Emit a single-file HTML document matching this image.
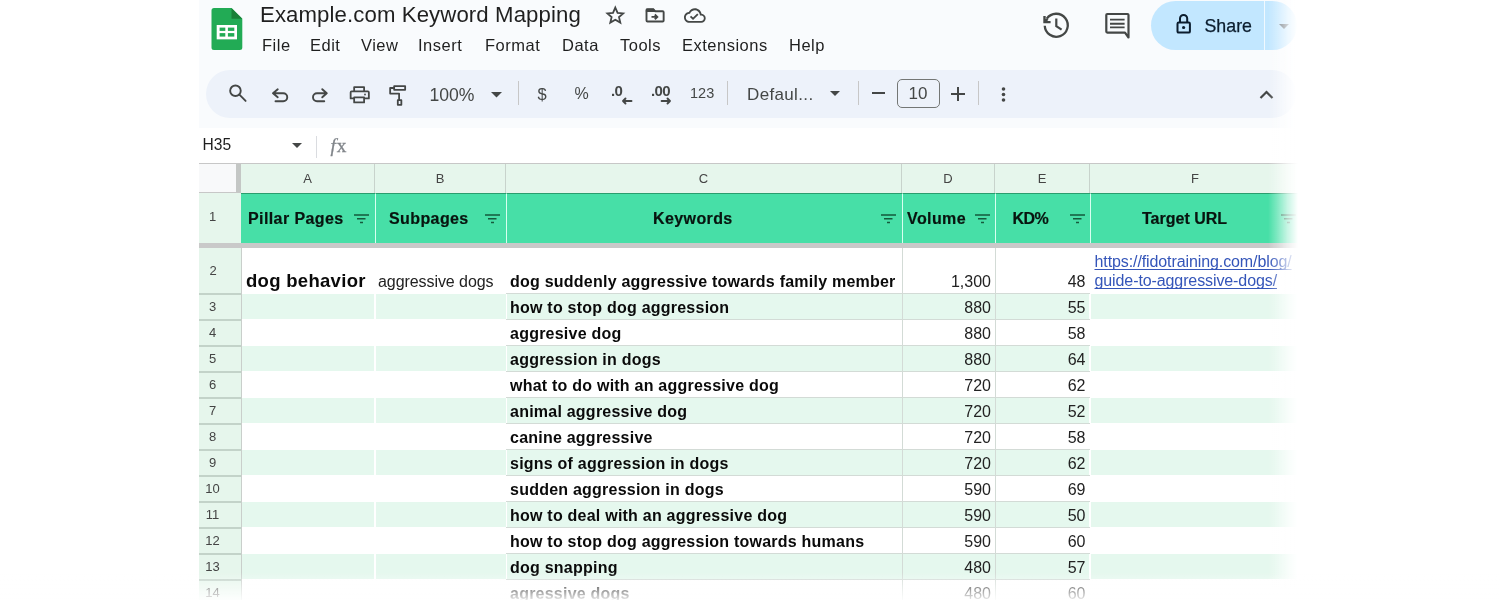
<!DOCTYPE html>
<html><head><meta charset="utf-8">
<style>
*{margin:0;padding:0;box-sizing:border-box}
html,body{width:1500px;height:600px;overflow:hidden;background:#fff;font-family:"Liberation Sans",sans-serif}
.a{position:absolute;white-space:nowrap}
#top{position:absolute;left:199px;top:0;width:1101px;height:128px;background:#f9fbfd}
#tb{position:absolute;left:205.5px;top:69.5px;width:1090.5px;height:48.8px;background:#edf2fa;border-radius:25px}
.menu{font-size:16.5px;color:#1f1f1f;top:35.5px;letter-spacing:0.5px}
.ico{position:absolute}
.tbt{color:#444746}
.sep{position:absolute;width:1px;background:#c7c7c7}
.colh{position:absolute;top:164px;height:29px;background:#e6f6ec;font-size:13px;color:#444;text-align:center;line-height:29px;border-right:1px solid #c8d3cc}
.hdr{position:absolute;top:193px;height:50px;background:#47dfa7;border-top:1px solid #2a9e6e}
.hdr span{position:absolute;top:16px;font-size:16px;font-weight:bold;color:#08140f;letter-spacing:0.4px;-webkit-text-stroke:0.2px #08140f}
.flt{position:absolute;top:20px;width:15px;height:10px}
.rowh{position:absolute;left:199px;width:42px;background:#e6f6ec;font-size:13px;color:#444;}
.rowh span{position:absolute;left:0;width:27px;text-align:center}
.band{position:absolute;background:#e5f8ee}
.vl{position:absolute;width:1px;background:#d3dbd6}
.hl{position:absolute;height:1px;background:#d3dbd6}
.kw{font-size:16px;font-weight:bold;color:#0a0a0a;letter-spacing:0.23px}
.num{font-size:16px;color:#222;text-align:right}
</style></head><body><div id="wrap" style="position:absolute;left:0;top:0;width:1500px;height:600px;overflow:hidden;will-change:transform">
<div id="top"></div>
<!-- logo -->
<svg class="ico" style="left:211px;top:8px" width="32" height="42" viewBox="0 0 32 42">
 <path d="M3 0H20.5L31.3 10.8V39.5a2.5 2.5 0 0 1-2.5 2.5H3a2.5 2.5 0 0 1-2.5-2.5V2.5A2.5 2.5 0 0 1 3 0z" fill="#22ab55"/>
 <path d="M20.5 0L31.3 10.8H20.5z" fill="#188038"/>
 <rect x="5.7" y="17" width="20.3" height="14.35" fill="#fff"/>
 <rect x="8.6" y="19.6" width="5.7" height="3.3" fill="#22ab55"/>
 <rect x="16.9" y="19.6" width="6.4" height="3.3" fill="#22ab55"/>
 <rect x="8.6" y="25.1" width="5.7" height="3.5" fill="#22ab55"/>
 <rect x="16.9" y="25.1" width="6.4" height="3.5" fill="#22ab55"/>
</svg>
<div class="a" style="left:260px;top:2px;font-size:22.2px;color:#1f1f1f;letter-spacing:0.1px">Example.com Keyword Mapping</div>
<!-- star -->
<svg class="ico" style="left:600px;top:2px" width="112" height="28" viewBox="0 0 112 28">
<path d="M15.3 5.6L17.6 10.9L23.2 11.4L19 15.1L20.3 20.6L15.3 17.7L10.3 20.6L11.6 15.1L7.4 11.4L13 10.9Z" fill="none" stroke="#444746" stroke-width="1.8" stroke-linejoin="miter"/>
<path d="M46.5 8.3a1 1 0 0 1 1-1H53.3L55.3 9.3H62.65a1 1 0 0 1 1 1V18.55a1 1 0 0 1-1 1H47.5a1 1 0 0 1-1-1Z" fill="none" stroke="#444746" stroke-width="1.9"/>
<path d="M46.5 7.3H53.3L55.3 9.3H46.5Z" fill="#444746" stroke="#444746" stroke-width="1.2"/>
<path d="M51.5 14.9H57.2M54.8 12.5L57.3 14.9L54.8 17.3" fill="none" stroke="#444746" stroke-width="1.9"/>
<g transform="translate(84 2.73) scale(0.904)"><path d="M19.35 10.04C18.67 6.59 15.64 4 12 4 9.11 4 6.6 5.64 5.35 8.04 2.34 8.36 0 10.91 0 14c0 3.31 2.69 6 6 6h13c2.76 0 5-2.24 5-5 0-2.64-2.05-4.78-4.65-4.96zM19 18H6c-2.21 0-4-1.79-4-4 0-2.05 1.53-3.76 3.56-3.97l1.07-.11.5-.95C8.08 7.14 9.94 6 12 6c2.62 0 4.88 1.86 5.39 4.43l.3 1.5 1.53.11c1.56.1 2.78 1.41 2.78 2.96 0 1.65-1.35 3-3 3zm-9-3.82l-2.09-2.09L6.5 13.5 10 17l6.01-6.01-1.41-1.41z" fill="#444746"/></g>
</svg>
<!-- menu -->
<div class="a menu" style="left:262px">File</div>
<div class="a menu" style="left:310px">Edit</div>
<div class="a menu" style="left:361px">View</div>
<div class="a menu" style="left:418px">Insert</div>
<div class="a menu" style="left:485px">Format</div>
<div class="a menu" style="left:562px">Data</div>
<div class="a menu" style="left:620px">Tools</div>
<div class="a menu" style="left:682px">Extensions</div>
<div class="a menu" style="left:789px">Help</div>
<!-- history -->
<svg class="ico" style="left:1036px;top:6px" width="40" height="38" viewBox="0 0 40 38"><path d="M10.8 12.7A11.5 11.5 0 1 1 8.76 19.7" fill="none" stroke="#444746" stroke-width="2.3"/><path d="M8.5 10V16.1H14.6M8.9 15.7L11.6 13" fill="none" stroke="#444746" stroke-width="2.4"/><path d="M20.3 12.4V20.2L25.6 23.6" fill="none" stroke="#444746" stroke-width="2.2"/></svg>
<!-- comment -->
<svg class="ico" style="left:1098px;top:6px" width="40" height="38" viewBox="0 0 40 38"><path d="M9.3 8H29.5a1 1 0 0 1 1 1V31.5L27 26.6H9.3a1 1 0 0 1-1-1V9a1 1 0 0 1 1-1z" fill="none" stroke="#444746" stroke-width="2.2" stroke-linejoin="round"/><path d="M12 13.6H26.6M12 17.7H26.6M12 21.4H26.6" stroke="#444746" stroke-width="1.9"/></svg>
<!-- share -->
<div style="position:absolute;left:1151px;top:1px;width:146px;height:49px;background:#c2e7ff;border-radius:24.5px"></div>
<div style="position:absolute;left:1263.5px;top:1px;width:1.2px;height:49px;background:rgba(255,255,255,0.75)"></div>
<svg class="ico" style="left:1168px;top:8px" width="32" height="32" viewBox="0 0 32 32"><rect x="9.5" y="14.6" width="12.4" height="10" rx="1.2" fill="none" stroke="#0b1d2e" stroke-width="2"/><path d="M12 14.6V10.6a3.6 3.6 0 0 1 7.2 0V14.6" fill="none" stroke="#0b1d2e" stroke-width="2"/><circle cx="15.6" cy="19.5" r="1.6" fill="#0b1d2e"/></svg>
<div class="a" style="left:1204.5px;top:15.5px;font-size:17.8px;color:#0b1d2e;-webkit-text-stroke:0.25px #0b1d2e">Share</div>
<svg class="ico" style="left:1279px;top:24px" width="10" height="5" viewBox="0 0 10 5"><path d="M0 0h10L5 5z" fill="#5b6770"/></svg>

<!-- toolbar -->
<div id="tb"></div>
<svg class="ico" style="left:224px;top:80px" width="30" height="28" viewBox="0 0 30 28"><circle cx="11.45" cy="10.75" r="5.3" fill="none" stroke="#444746" stroke-width="1.9"/><path d="M15.4 14.7L21.6 20.9" stroke="#444746" stroke-width="1.9" stroke-linecap="round"/></svg>
<svg class="ico" style="left:266px;top:80px" width="70" height="30" viewBox="0 0 70 30"><g fill="none" stroke="#444746" stroke-width="1.9" stroke-linecap="round" stroke-linejoin="round"><path d="M11.75 9.25L7 13.25L11.75 17.25M7 13.25H17.25A4 4 0 0 1 17.25 21.25H9.5"/><path d="M56.25 9.25L60.75 13.25L56.25 17.25M60.75 13.25H51A4 4 0 0 0 51 21.25H58.25"/></g></svg>
<svg class="ico" style="left:344px;top:80px" width="70" height="30" viewBox="0 0 70 30"><g fill="none" stroke="#444746" stroke-width="1.8" stroke-linejoin="round"><path d="M10.15 11.4V7.15H20.1V11.4"/><path d="M10.15 18.4H6.65V12.4a1 1 0 0 1 1-1H23.85a1 1 0 0 1 1 1V18.4H20.1"/><rect x="10.15" y="17.4" width="9.95" height="5"/><rect x="50.15" y="6.15" width="11" height="3.7"/><path d="M50.15 8H46.15V13.6H55.1V20.15"/><rect x="53.8" y="20.15" width="3.55" height="4.7"/></g><circle cx="21" cy="14.5" r="0.9" fill="#444746"/></svg>
<div class="a tbt" style="left:429.5px;top:84.5px;font-size:17.6px">100%</div>
<svg class="ico" style="left:491px;top:92px" width="11" height="6" viewBox="0 0 11 6"><path d="M0 0h11L5.5 5.5z" fill="#444746"/></svg>
<div class="sep" style="left:518px;top:81px;height:24px"></div>
<div class="a tbt" style="left:537.5px;top:84.5px;font-size:16.5px">$</div>
<div class="a tbt" style="left:574.5px;top:85px;font-size:16px">%</div>
<div class="a tbt" style="left:611px;top:82px;font-size:15px;font-weight:bold;letter-spacing:-0.6px">.0</div>
<div class="a tbt" style="left:651px;top:82px;font-size:15px;font-weight:bold;letter-spacing:-0.6px">.00</div>
<svg class="ico" style="left:604px;top:78px" width="76" height="32" viewBox="0 0 76 32"><g fill="none" stroke="#444746" stroke-width="1.9" stroke-linecap="round" stroke-linejoin="round"><path d="M27.5 23H19M21.5 20.5L19 23L21.5 25.5"/><path d="M57.6 23H66M63.5 20.5L66 23L63.5 25.5"/></g></svg>
<div class="a tbt" style="left:690px;top:85px;font-size:14.5px">123</div>
<div class="sep" style="left:727px;top:81px;height:24px"></div>
<div class="a tbt" style="left:747px;top:84.5px;font-size:17px;letter-spacing:0.35px">Defaul...</div>
<svg class="ico" style="left:830px;top:91px" width="10" height="5" viewBox="0 0 10 5"><path d="M0 0h10L5 5z" fill="#444746"/></svg>
<div class="sep" style="left:858px;top:81px;height:24px"></div>
<div style="position:absolute;left:872px;top:92px;width:13px;height:2px;background:#444746"></div>
<div style="position:absolute;left:897px;top:79px;width:43px;height:29px;border:1.2px solid #747775;border-radius:5px"></div>
<div class="a tbt" style="left:908.5px;top:84px;font-size:17px">10</div>
<svg class="ico" style="left:951px;top:87px" width="14" height="14" viewBox="0 0 14 14"><path d="M0 7h14M7 0v14" stroke="#444746" stroke-width="2"/></svg>
<div class="sep" style="left:978px;top:81px;height:24px"></div>
<svg class="ico" style="left:1001px;top:87px" width="5" height="15" viewBox="0 0 5 15"><circle cx="2.5" cy="2" r="1.8" fill="#444746"/><circle cx="2.5" cy="7.5" r="1.8" fill="#444746"/><circle cx="2.5" cy="13" r="1.8" fill="#444746"/></svg>
<svg class="ico" style="left:1259px;top:90px" width="15" height="9" viewBox="0 0 15 9"><path d="M1.5 8l6-6 6 6" fill="none" stroke="#444746" stroke-width="2.2"/></svg>

<!-- formula bar -->
<div class="a" style="left:202.5px;top:136px;font-size:15.6px;color:#1f1f1f">H35</div>
<svg class="ico" style="left:292px;top:143px" width="10" height="5" viewBox="0 0 10 5"><path d="M0 0h10L5 5z" fill="#444746"/></svg>
<div class="sep" style="left:316px;top:136px;height:22px;background:#dadce0"></div>
<div class="a" style="left:330.5px;top:135px;font-size:19.3px;font-family:'Liberation Serif',serif;color:#80858a;-webkit-text-stroke:0.3px #80858a"><i>f</i><span style="margin-left:1px">x</span></div>

<!-- grid -->
<div style="position:absolute;left:199px;top:163px;width:1101px;height:1px;background:#c7c7c7"></div>
<div style="position:absolute;left:199px;top:164px;width:37px;height:29px;background:#f8f9fa"></div>
<div style="position:absolute;left:236px;top:164px;width:5px;height:29px;background:#c4c7c5"></div>
<div class="colh" style="left:241px;width:134px">A</div>
<div class="colh" style="left:375px;width:131px">B</div>
<div class="colh" style="left:506px;width:396px">C</div>
<div class="colh" style="left:902px;width:93px">D</div>
<div class="colh" style="left:995px;width:95px">E</div>
<div class="colh" style="left:1090px;width:210px;border-right:none">F</div>
<div style="position:absolute;left:199px;top:192px;width:42px;height:1px;background:#c7c7c7"></div>

<!-- header row -->
<div class="rowh" style="top:193px;height:50px;border-bottom:none"><span style="top:16px">1</span></div>

<div class="hdr" style="left:241px;width:134px"><span style="left:7px">Pillar Pages</span><svg class="flt" style="left:113px" viewBox="0 0 15 10"><path d="M0 1h15M3 4.8h8.5M6 8.5h3" stroke="#155a3c" stroke-width="1.5"/></svg></div>
<div class="hdr" style="left:375px;width:131px;border-left:1.5px solid #d8fff0"><span style="left:13px">Subpages</span><svg class="flt" style="left:109px" viewBox="0 0 15 10"><path d="M0 1h15M3 4.8h8.5M6 8.5h3" stroke="#155a3c" stroke-width="1.5"/></svg></div>
<div class="hdr" style="left:506px;width:396px;border-left:1.5px solid #d8fff0"><span style="left:146px">Keywords</span><svg class="flt" style="left:374px" viewBox="0 0 15 10"><path d="M0 1h15M3 4.8h8.5M6 8.5h3" stroke="#155a3c" stroke-width="1.5"/></svg></div>
<div class="hdr" style="left:902px;width:93px;border-left:1.5px solid #d8fff0"><span style="left:4px">Volume</span><svg class="flt" style="left:72px" viewBox="0 0 15 10"><path d="M0 1h15M3 4.8h8.5M6 8.5h3" stroke="#155a3c" stroke-width="1.5"/></svg></div>
<div class="hdr" style="left:995px;width:95px;border-left:1.5px solid #d8fff0"><span style="left:16.5px;letter-spacing:-0.6px">KD%</span><svg class="flt" style="left:74px" viewBox="0 0 15 10"><path d="M0 1h15M3 4.8h8.5M6 8.5h3" stroke="#155a3c" stroke-width="1.5"/></svg></div>
<div class="hdr" style="left:1090px;width:220px;border-left:1.5px solid #d8fff0"><span style="left:51px;letter-spacing:0px">Target URL</span><svg class="flt" style="left:190px" viewBox="0 0 15 10"><path d="M0 1h15M3 4.8h8.5M6 8.5h3" stroke="#155a3c" stroke-width="1.5"/></svg></div>
<!-- frozen bar -->
<div style="position:absolute;left:199px;top:243px;width:1101px;height:5px;background:#c9c9c9"></div>

<div id="rows">
<div class="rowh" style="top:248px;height:46px"><span style="top:14.5px;left:0.5px">2</span></div>
<div class="a" style="left:246px;top:270.5px;font-size:18.5px;font-weight:bold;color:#0a0a0a;letter-spacing:0.3px;line-height:20px">dog behavior</div>
<div class="a" style="left:378px;top:272px;font-size:16px;color:#222;line-height:20px;letter-spacing:-0.07px">aggressive dogs</div>
<div class="a kw" style="left:510px;top:273.9px;line-height:16px">dog suddenly aggressive towards family member</div>
<div class="a num" style="left:902px;width:89px;top:273.9px;line-height:16px">1,300</div>
<div class="a num" style="left:995px;width:90.5px;top:273.9px;line-height:16px">48</div>
<div class="a" style="left:1094.5px;top:252px;font-size:16px;color:#3455b9;text-decoration:underline;text-decoration-thickness:1.3px;text-underline-offset:1.5px;text-decoration-skip-ink:none;line-height:19.4px;letter-spacing:-0.1px">https://fidotraining.com/blog/<br>guide-to-aggressive-dogs/</div>
<div class="hl" style="left:506px;top:293px;width:584px"></div>
<div class="rowh" style="top:293px;height:27px"><span style="top:5.5px">3</span></div>
<div class="band" style="left:241px;top:294px;width:133px;height:25px"></div>
<div class="band" style="left:376px;top:294px;width:130px;height:25px"></div>
<div class="band" style="left:507px;top:294px;width:582px;height:25px"></div>
<div class="band" style="left:1091px;top:294px;width:220px;height:25px"></div>
<div class="hl" style="left:506px;top:319px;width:584px"></div>
<div class="a kw" style="left:510px;top:300.2px;line-height:16px">how to stop dog aggression</div>
<div class="a num" style="left:902px;width:89px;top:300.2px;line-height:16px">880</div>
<div class="a num" style="left:995px;width:90.5px;top:300.2px;line-height:16px">55</div>
<div class="rowh" style="top:319px;height:27px"><span style="top:5.5px">4</span></div>
<div class="hl" style="left:506px;top:345px;width:584px"></div>
<div class="a kw" style="left:510px;top:326.2px;line-height:16px">aggresive dog</div>
<div class="a num" style="left:902px;width:89px;top:326.2px;line-height:16px">880</div>
<div class="a num" style="left:995px;width:90.5px;top:326.2px;line-height:16px">58</div>
<div class="rowh" style="top:345px;height:27px"><span style="top:5.5px">5</span></div>
<div class="band" style="left:241px;top:346px;width:133px;height:25px"></div>
<div class="band" style="left:376px;top:346px;width:130px;height:25px"></div>
<div class="band" style="left:507px;top:346px;width:582px;height:25px"></div>
<div class="band" style="left:1091px;top:346px;width:220px;height:25px"></div>
<div class="hl" style="left:506px;top:371px;width:584px"></div>
<div class="a kw" style="left:510px;top:352.2px;line-height:16px">aggression in dogs</div>
<div class="a num" style="left:902px;width:89px;top:352.2px;line-height:16px">880</div>
<div class="a num" style="left:995px;width:90.5px;top:352.2px;line-height:16px">64</div>
<div class="rowh" style="top:371px;height:27px"><span style="top:5.5px">6</span></div>
<div class="hl" style="left:506px;top:397px;width:584px"></div>
<div class="a kw" style="left:510px;top:378.2px;line-height:16px">what to do with an aggressive dog</div>
<div class="a num" style="left:902px;width:89px;top:378.2px;line-height:16px">720</div>
<div class="a num" style="left:995px;width:90.5px;top:378.2px;line-height:16px">62</div>
<div class="rowh" style="top:397px;height:27px"><span style="top:5.5px">7</span></div>
<div class="band" style="left:241px;top:398px;width:133px;height:25px"></div>
<div class="band" style="left:376px;top:398px;width:130px;height:25px"></div>
<div class="band" style="left:507px;top:398px;width:582px;height:25px"></div>
<div class="band" style="left:1091px;top:398px;width:220px;height:25px"></div>
<div class="hl" style="left:506px;top:423px;width:584px"></div>
<div class="a kw" style="left:510px;top:404.2px;line-height:16px">animal aggressive dog</div>
<div class="a num" style="left:902px;width:89px;top:404.2px;line-height:16px">720</div>
<div class="a num" style="left:995px;width:90.5px;top:404.2px;line-height:16px">52</div>
<div class="rowh" style="top:423px;height:27px"><span style="top:5.5px">8</span></div>
<div class="hl" style="left:506px;top:449px;width:584px"></div>
<div class="a kw" style="left:510px;top:430.2px;line-height:16px">canine aggressive</div>
<div class="a num" style="left:902px;width:89px;top:430.2px;line-height:16px">720</div>
<div class="a num" style="left:995px;width:90.5px;top:430.2px;line-height:16px">58</div>
<div class="rowh" style="top:449px;height:27px"><span style="top:5.5px">9</span></div>
<div class="band" style="left:241px;top:450px;width:133px;height:25px"></div>
<div class="band" style="left:376px;top:450px;width:130px;height:25px"></div>
<div class="band" style="left:507px;top:450px;width:582px;height:25px"></div>
<div class="band" style="left:1091px;top:450px;width:220px;height:25px"></div>
<div class="hl" style="left:506px;top:475px;width:584px"></div>
<div class="a kw" style="left:510px;top:456.2px;line-height:16px">signs of aggression in dogs</div>
<div class="a num" style="left:902px;width:89px;top:456.2px;line-height:16px">720</div>
<div class="a num" style="left:995px;width:90.5px;top:456.2px;line-height:16px">62</div>
<div class="rowh" style="top:475px;height:27px"><span style="top:5.5px">10</span></div>
<div class="hl" style="left:506px;top:501px;width:584px"></div>
<div class="a kw" style="left:510px;top:482.2px;line-height:16px">sudden aggression in dogs</div>
<div class="a num" style="left:902px;width:89px;top:482.2px;line-height:16px">590</div>
<div class="a num" style="left:995px;width:90.5px;top:482.2px;line-height:16px">69</div>
<div class="rowh" style="top:501px;height:27px"><span style="top:5.5px">11</span></div>
<div class="band" style="left:241px;top:502px;width:133px;height:25px"></div>
<div class="band" style="left:376px;top:502px;width:130px;height:25px"></div>
<div class="band" style="left:507px;top:502px;width:582px;height:25px"></div>
<div class="band" style="left:1091px;top:502px;width:220px;height:25px"></div>
<div class="hl" style="left:506px;top:527px;width:584px"></div>
<div class="a kw" style="left:510px;top:508.2px;line-height:16px">how to deal with an aggressive dog</div>
<div class="a num" style="left:902px;width:89px;top:508.2px;line-height:16px">590</div>
<div class="a num" style="left:995px;width:90.5px;top:508.2px;line-height:16px">50</div>
<div class="rowh" style="top:527px;height:27px"><span style="top:5.5px">12</span></div>
<div class="hl" style="left:506px;top:553px;width:584px"></div>
<div class="a kw" style="left:510px;top:534.2px;line-height:16px">how to stop dog aggression towards humans</div>
<div class="a num" style="left:902px;width:89px;top:534.2px;line-height:16px">590</div>
<div class="a num" style="left:995px;width:90.5px;top:534.2px;line-height:16px">60</div>
<div class="rowh" style="top:553px;height:27px"><span style="top:5.5px">13</span></div>
<div class="band" style="left:241px;top:554px;width:133px;height:25px"></div>
<div class="band" style="left:376px;top:554px;width:130px;height:25px"></div>
<div class="band" style="left:507px;top:554px;width:582px;height:25px"></div>
<div class="band" style="left:1091px;top:554px;width:220px;height:25px"></div>
<div class="hl" style="left:506px;top:579px;width:584px"></div>
<div class="a kw" style="left:510px;top:560.2px;line-height:16px">dog snapping</div>
<div class="a num" style="left:902px;width:89px;top:560.2px;line-height:16px">480</div>
<div class="a num" style="left:995px;width:90.5px;top:560.2px;line-height:16px">57</div>
<div class="rowh" style="top:579px;height:27px"><span style="top:5.5px">14</span></div>
<div class="hl" style="left:506px;top:605px;width:584px"></div>
<div class="a kw" style="left:510px;top:586.2px;line-height:16px">agressive dogs</div>
<div class="a num" style="left:902px;width:89px;top:586.2px;line-height:16px">480</div>
<div class="a num" style="left:995px;width:90.5px;top:586.2px;line-height:16px">60</div>
<div style="position:absolute;left:199px;top:293px;width:42px;height:1.5px;background:#c3d3c9"></div>
<div style="position:absolute;left:199px;top:319px;width:42px;height:1.5px;background:#c3d3c9"></div>
<div style="position:absolute;left:199px;top:345px;width:42px;height:1.5px;background:#c3d3c9"></div>
<div style="position:absolute;left:199px;top:371px;width:42px;height:1.5px;background:#c3d3c9"></div>
<div style="position:absolute;left:199px;top:397px;width:42px;height:1.5px;background:#c3d3c9"></div>
<div style="position:absolute;left:199px;top:423px;width:42px;height:1.5px;background:#c3d3c9"></div>
<div style="position:absolute;left:199px;top:449px;width:42px;height:1.5px;background:#c3d3c9"></div>
<div style="position:absolute;left:199px;top:475px;width:42px;height:1.5px;background:#c3d3c9"></div>
<div style="position:absolute;left:199px;top:501px;width:42px;height:1.5px;background:#c3d3c9"></div>
<div style="position:absolute;left:199px;top:527px;width:42px;height:1.5px;background:#c3d3c9"></div>
<div style="position:absolute;left:199px;top:553px;width:42px;height:1.5px;background:#c3d3c9"></div>
<div style="position:absolute;left:199px;top:579px;width:42px;height:1.5px;background:#c3d3c9"></div>
<div style="position:absolute;left:199px;top:605px;width:42px;height:1.5px;background:#c3d3c9"></div>
<div style="position:absolute;left:240.5px;top:248px;width:1.5px;height:352px;background:#c9cfcb"></div>
<div class="vl" style="left:902px;top:248px;height:352px"></div>
<div class="vl" style="left:995px;top:248px;height:352px"></div>
<div style="position:absolute;left:1268px;top:0;width:30px;height:600px;background:linear-gradient(to right,rgba(255,255,255,0),rgba(255,255,255,0.3) 30%,rgba(255,255,255,0.7) 65%,#fff)"></div>
<div style="position:absolute;left:1298px;top:0;width:202px;height:600px;background:#fff"></div>
<div style="position:absolute;left:0;top:572px;width:1500px;height:28px;background:linear-gradient(to bottom,rgba(255,255,255,0),rgba(255,255,255,0.9))"></div>
</div>
</div></body></html>
